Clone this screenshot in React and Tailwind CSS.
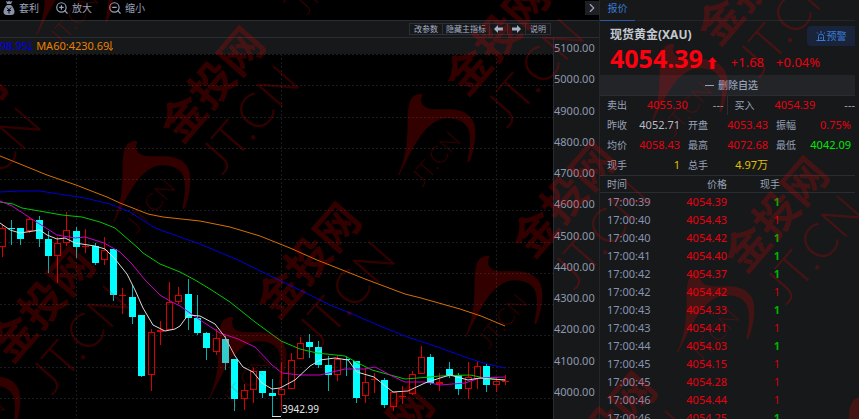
import { ChevronRight, ZoomIn, ZoomOut } from 'lucide-react'

const PRICES = ['5100.00', '5000.00', '4900.00', '4800.00', '4700.00', '4600.00', '4500.00', '4400.00', '4300.00', '4200.00', '4100.00', '4000.00']

// x, body top, body bottom, high, low, direction
const CANDLES = [
  [2, 228, 247, 224, 257, 'up'],
  [11, 228, 229, 220, 245, 'down'],
  [20, 228, 239, 228, 245, 'down'],
  [29, 219, 231, 217, 233, 'up'],
  [39, 220, 239, 216, 247, 'down'],
  [48, 239, 256, 231, 273, 'down'],
  [57, 243, 256, 237, 283, 'up'],
  [66, 230, 243, 212, 246, 'up'],
  [76, 231, 247, 227, 258, 'down'],
  [85, 246, 246, 229, 253, 'up'],
  [95, 246, 263, 243, 265, 'down'],
  [104, 250, 260, 237, 265, 'up'],
  [113, 249, 295, 249, 301, 'down'],
  [122, 295, 295, 288, 314, 'up'],
  [132, 297, 317, 285, 324, 'down'],
  [141, 315, 376, 315, 377, 'down'],
  [151, 332, 375, 329, 391, 'up'],
  [160, 330, 332, 321, 345, 'up'],
  [169, 302, 330, 282, 330, 'up'],
  [178, 295, 302, 287, 304, 'up'],
  [188, 294, 318, 279, 330, 'down'],
  [197, 318, 333, 295, 335, 'down'],
  [206, 333, 348, 332, 360, 'down'],
  [216, 338, 352, 329, 355, 'up'],
  [225, 339, 363, 336, 370, 'down'],
  [234, 359, 399, 359, 411, 'down'],
  [244, 390, 399, 384, 410, 'up'],
  [253, 371, 390, 368, 403, 'up'],
  [262, 371, 393, 371, 398, 'down'],
  [272, 393, 396, 379, 416, 'down'],
  [281, 389, 395, 362, 411, 'up'],
  [291, 360, 389, 353, 389, 'up'],
  [300, 343, 359, 337, 359, 'up'],
  [309, 342, 347, 334, 358, 'down'],
  [318, 347, 365, 341, 368, 'down'],
  [328, 365, 375, 356, 391, 'down'],
  [337, 359, 375, 355, 381, 'up'],
  [346, 359, 360, 356, 376, 'down'],
  [356, 361, 398, 361, 403, 'down'],
  [365, 382, 396, 368, 403, 'up'],
  [374, 379, 380, 373, 393, 'up'],
  [384, 380, 405, 378, 408, 'down'],
  [393, 392, 407, 392, 411, 'up'],
  [402, 396, 396, 386, 404, 'up'],
  [412, 374, 394, 371, 395, 'up'],
  [421, 357, 374, 346, 374, 'up'],
  [430, 357, 383, 354, 385, 'down'],
  [439, 382, 384, 373, 391, 'up'],
  [449, 369, 375, 362, 378, 'down'],
  [458, 375, 389, 373, 395, 'down'],
  [468, 377, 389, 362, 399, 'up'],
  [477, 366, 379, 361, 389, 'up'],
  [486, 366, 385, 364, 392, 'down'],
  [496, 381, 385, 377, 392, 'up'],
  [505, 381, 381, 375, 385, 'up'],
]

const AVERAGES = [
  ['#d87000', '0,156 20,164 47,175 76,185 107,197 120,203 148,214 163,217 200,221 230,227 260,236 290,248 317,260 350,273 365,279 405,294 421,298 460,309 481,316 505,326'],
  ['#0000d8', '0,192 20,191 40,191 65,195 85,198 110,204 130,212 155,228 180,237 200,244 238,260 281,281 310,295 330,305 350,313 380,326 410,338 435,346 465,357 480,362 505,368'],
  ['#00c800', '0,202 13,204 22,208 45,212 62,215 82,217 100,222 115,228 138,248 143,253 160,264 180,272 195,280 210,289 230,302 255,322 281,341 300,349 317,353 345,356 358,363 372,370 405,379 430,377 440,376 470,375 490,379 505,380'],
  ['#c800c8', '0,201 12,206 38,223 57,235 75,238 85,237 104,243 120,252 132,264 145,280 160,295 170,301 180,306 200,320 220,333 238,339 255,347 272,365 282,373 300,375 320,375 345,369 365,369 375,367 392,376 405,382 425,382 440,385 465,383 480,378 505,377'],
  ['#dcdcdc', '0,223 10,230 20,233 40,230 47,235 57,239 65,238 75,243 95,246 105,249 115,259 127,274 135,290 143,308 153,325 165,331 175,329 180,326 188,315 200,316 215,324 225,337 235,356 243,367 253,372 262,383 272,389 280,388 295,380 310,366 320,360 335,358 348,360 357,372 374,377 393,392 408,391 425,383 440,378 450,375 468,380 480,378 505,380'],
]

const TICKS = [
  ['17:00:39', '4054.39', 'down'],
  ['17:00:40', '4054.43', 'up'],
  ['17:00:40', '4054.42', 'down'],
  ['17:00:41', '4054.40', 'down'],
  ['17:00:42', '4054.37', 'down'],
  ['17:00:42', '4054.42', 'up'],
  ['17:00:43', '4054.33', 'down'],
  ['17:00:43', '4054.41', 'up'],
  ['17:00:44', '4054.03', 'down'],
  ['17:00:45', '4054.15', 'up'],
  ['17:00:45', '4054.28', 'up'],
  ['17:00:46', '4054.44', 'up'],
  ['17:00:46', '4054.25', 'down'],
]

const STATS = [
  ['昨收', '4052.71', 'text-[#b8bcc4]'],
  ['开盘', '4053.43', 'text-[#e80010]'],
  ['振幅', '0.75%', 'text-[#e80010]'],
  ['均价', '4058.43', 'text-[#e80010]'],
  ['最高', '4072.68', 'text-[#e80010]'],
  ['最低', '4042.09', 'text-[#00e800]'],
  ['现手', '1', 'text-[#e0c000]'],
  ['总手', '4.97万', 'text-[#e0c000]'],
]

const MARKS = [
  [36, 35], [283, 3], [-145, 264], [113, 222], [398, 175], [650, 125], [-57, 442],
  [209, 398], [465, 337], [677, 352], [839, 478], [282, 582], [505, 567],
]

function MoneyBag() {
  return (
    <svg className="w-3 h-4" viewBox="0 0 12 16" fill="#8791a8">
      <path d="M3 1l2 .8L6 .6l1 1.2L9.500 1 8 4H4z" />
      <path d="M4 5h4c2 2 3.500 4.500 3.500 7 0 2-1.500 3-3 3h-5c-1.500 0-3-1-3-3C.5 9.500 2 7 4 5z" />
      <path d="M4 7.500l2 2.500 2-2.500M4 10.500h4M6 10v3.500" fill="none" stroke="#000" />
    </svg>
  )
}

function AlarmIcon() {
  return (
    <svg className="w-[10px] h-[10px]" viewBox="0 0 10 10" fill="none" stroke="currentColor">
      <path d="M2.500 9V5.500a2.500 2.500 0 0 1 5 0V9M.5 9.500h9M5 0v2M1 1.500l1.200 1.200M9 1.500L7.800 2.700M5 6v2" />
    </svg>
  )
}

function DownArrow() {
  return (
    <svg className="w-1 h-[10px] shrink-0" viewBox="0 0 4 10" fill="none" stroke="currentColor">
      <path d="M2 0v9M0 7l2 2.500L4 7" />
    </svg>
  )
}

function Chart() {
  return (
    <svg className="block w-full h-full" viewBox="0 54 553 365" preserveAspectRatio="xMinYMin slice" shapeRendering="crispEdges">
      <g stroke="#1a1b1e" strokeDasharray="2 2">
        {PRICES.map((p, i) => (
          <line key={p} x1="0" x2="553" y1={Math.round(i * 31.27) + 54.5} y2={Math.round(i * 31.27) + 54.5} />
        ))}
        {[76.5, 281.5, 496.5].map((x) => <line key={x} x1={x} x2={x} y1="54" y2="419" />)}
      </g>
      {CANDLES.map(([x, top, bottom, high, low, dir]) => dir === 'up' ? (
        <g key={x} stroke="#d80000" fill="none">
          <path d={`M${x + 0.5} ${high}V${top}M${x + 0.5} ${bottom}V${low}`} />
          {bottom - top < 2
            ? <path d={`M${x - 3} ${top + 0.5}h7`} />
            : <rect x={x - 2.5} y={top + 0.5} width="6" height={bottom - top - 1} />}
        </g>
      ) : (
        <g key={x} fill="#00ffff">
          <rect x={x} y={high} width="1" height={low - high} opacity="0.7" />
          <rect x={x - 3} y={top} width="7" height={bottom - top} />
        </g>
      ))}
      <g fill="none" shapeRendering="auto">
        {AVERAGES.map(([color, points]) => <polyline key={color} points={points} stroke={color} />)}
      </g>
      <path d="M272 416.500h9" stroke="#e0e0e0" />
      <text x="282" y="413" fill="#e6e6e6" className="text-[10px]">3942.99</text>
    </svg>
  )
}

function Watermark() {
  return (
    <svg className="absolute inset-0 w-full h-full pointer-events-none" fill="#ff0000" opacity="0.2" aria-hidden="true">
      {MARKS.map(([x, y]) => (
        <g key={x} transform={`translate(${x} ${y})`} textAnchor="middle">
          <path
            transform="scale(.3333) translate(-143 -285)"
            d="M143 285C165 240 172 190 172 120C172 60 185 42 213 42C217 42 217 46 213 52C208 75 225 88 255 88L300 88C350 90 375 115 375 155C375 190 368 220 357 245Q352 248 351 243C362 190 362 160 350 140C335 118 300 110 270 118C215 140 190 200 147 285Z"
          />
          <text transform="translate(100 -137) rotate(-49)" y="15" className="text-[44px] font-bold">金投网</text>
          <text transform="translate(138 -102) rotate(-49)" y="15" className="text-[48px] font-light font-['Lato']">JT.CN</text>
          <text transform="translate(38 -16) rotate(-49)" y="8" className="text-[24px] font-light font-['Lato']">JT.CN</text>
        </g>
      ))}
    </svg>
  )
}

function ChartPane() {
  return (
    <main className="flex-1 min-w-0 flex flex-col">
      <div className="h-5 shrink-0 flex items-center justify-between pl-[3px] pb-1 bg-black">
        <div className="flex items-center gap-4 text-[10px] text-[#9aa4ba]">
          <button className="flex items-center gap-1"><MoneyBag />套利</button>
          <button className="flex items-center gap-[3px]"><ZoomIn size={14} strokeWidth={2} />放大</button>
          <button className="flex items-center gap-[3px]"><ZoomOut size={14} strokeWidth={2} />缩小</button>
        </div>
        <button aria-label="展开" className="w-[14px] h-[14px] flex items-center justify-center bg-[#1d1f23] text-[#9aa4ba]">
          <ChevronRight size={14} />
        </button>
      </div>
      <div className="h-[18px] shrink-0 flex items-center justify-end pr-12 border-y border-[#2a2c34] text-[8px] text-[#a4aec4]">
        <button className="h-3 px-1 flex items-center border border-[#2c2e35]">改参数</button>
        <button className="h-3 px-[3px] flex items-center border border-l-0 border-[#2c2e35]">隐藏主指标</button>
        <button aria-label="左移" className="h-3 px-1 flex items-center border border-l-0 border-[#2c2e35]">
          <svg className="w-[9px] h-2" viewBox="0 0 9 8" fill="currentColor"><path d="M0 4l4-4v2.500h5v3H4V8z" /></svg>
        </button>
        <button aria-label="右移" className="h-3 px-1 flex items-center border border-l-0 border-[#2c2e35]">
          <svg className="w-[9px] h-2" viewBox="0 0 9 8" fill="currentColor"><path d="M9 4L5 0v2.500H0v3h5V8z" /></svg>
        </button>
        <button className="h-3 px-1 flex items-center border border-l-0 border-[#2c2e35]">说明</button>
      </div>
      <div className="flex-1 min-h-0 flex">
        <div className="flex-1 min-w-0 flex flex-col">
          <div className="h-4 shrink-0 flex items-center gap-1 overflow-hidden text-[11px] whitespace-nowrap">
            <div className="flex items-center text-[#0000f0]">98.95<DownArrow /></div>
            <div className="flex items-center text-[#e88000]">MA60:4230.69<DownArrow /></div>
          </div>
          <div className="flex-1 min-h-0 bg-black"><Chart /></div>
        </div>
        <div className="w-[46px] shrink-0 border-l border-[#2a2c34] text-[11px] text-[#8f99ad]">
          <div className="h-full flex flex-col justify-between pt-[2px] pb-[19px]">
            {PRICES.map((p) => <div key={p} className="h-4 leading-4">{p}</div>)}
          </div>
        </div>
      </div>
    </main>
  )
}

function QuotePane() {
  return (
    <aside className="w-[260px] shrink-0 flex flex-col pr-1 border-l border-[#24262b]">
      <div className="h-[21px] shrink-0 border-b border-[#24262b] text-[10px]">
        <button className="h-[21px] px-[7px] pb-1 w-[35px] whitespace-nowrap border-b border-[#2c5aa8] text-[#3a7bd5]">报价</button>
      </div>
      <div className="h-[54px] shrink-0 flex justify-between pl-[10px] pt-[5px]">
        <div>
          <h1 className="h-[18px] leading-[18px] text-[12px] font-bold text-[#c4c8d0]">现货黄金(XAU)</h1>
          <div className="h-[29px] flex items-center text-[13px] text-[#e80010] whitespace-nowrap">
            <strong className="text-[25px] leading-[29px] text-[#ff0010]">4054.39</strong>
            <svg className="w-[9px] h-3 ml-[5px] mr-[14px] mt-2" viewBox="0 0 9 12" fill="#ff0010">
              <path d="M4.500 0L9 5H6.500v7h-4V5H0z" />
            </svg>
            <span className="mt-2">+1.68</span>
            <span className="mt-2 ml-3">+0.04%</span>
          </div>
        </div>
        <button className="w-12 h-5 -ml-12 flex items-center justify-center gap-px rounded-l bg-[#19243a] text-[10px] text-[#3a7bd5]">
          <AlarmIcon />预警
        </button>
      </div>
      <button className="h-5 shrink-0 flex items-center justify-center gap-1 pl-2 bg-[#222428] text-[10px] font-medium text-[#98a2b8]">
        <span className="w-[9px] h-px bg-[#98a2b8]" />删除自选
      </button>
      <div className="h-5 shrink-0 flex items-center border-t border-[#2a2c34] text-[11px]">
        <div className="w-1/2 h-full flex items-center pl-[7px] pr-[3px] border-r border-[#2a2c34]">
          <span className="text-[10px] text-[#98a2b8]">卖出</span>
          <span className="ml-5 text-[#e80010]">4055.30</span>
          <span className="ml-auto text-[#98a2b8]">---</span>
        </div>
        <div className="w-1/2 flex items-center pl-[7px]">
          <span className="text-[10px] text-[#98a2b8]">买入</span>
          <span className="ml-5 text-[#e80010]">4054.39</span>
          <span className="ml-auto text-[#98a2b8]">---</span>
        </div>
      </div>
      <div className="shrink-0 grid grid-cols-[73fr_80fr_75fr] gap-x-2 pl-[7px] pr-1">
        {STATS.map(([label, value, color]) => (
          <div key={label} className="h-5 flex items-center justify-between text-[11px]">
            <span className="text-[10px] text-[#98a2b8]">{label}</span>
            <span className={color}>{value}</span>
          </div>
        ))}
      </div>
      <table className="w-full table-fixed border-collapse text-[11px] text-right">
        <thead>
          <tr className="h-[17px] border-y border-[#2a2c34] text-[10px] leading-4 text-[#98a2b8]">
            <th className="w-[60px] pl-[7px] text-left font-normal">时间</th>
            <th className="w-[67px] font-normal">价格</th>
            <th className="w-[53px] font-normal">现手</th>
            <th />
          </tr>
        </thead>
        <tbody>
          {TICKS.map(([time, price, dir]) => (
            <tr key={time + price} className="h-[18px] leading-[18px]">
              <td className="pl-[7px] text-left text-[#8793b0]">{time}</td>
              <td className="text-[#e80010]">{price}</td>
              <td className={dir === 'up' ? 'text-[#d80010]' : 'font-bold text-[#00b400]'}>1</td>
              <td />
            </tr>
          ))}
        </tbody>
      </table>
    </aside>
  )
}

export default function App() {
  return (
    <div className="relative h-screen flex overflow-hidden bg-[#16181a] font-['Noto_Sans','Noto_Sans_CJK_SC',sans-serif]">
      <ChartPane />
      <QuotePane />
      <Watermark />
    </div>
  )
}
